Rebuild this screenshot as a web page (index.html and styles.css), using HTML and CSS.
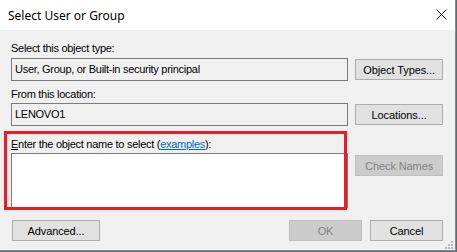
FILE: index.html
```html
<!DOCTYPE html>
<html>
<head>
<meta charset="utf-8">
<link rel="stylesheet" href="styles.css">
</head>
<body>
<div class="window">
  <div class="titlebar">
    <span class="title">Select User or Group</span>
    <svg class="close" width="11" height="11" viewBox="0 0 11 11"><path d="M0.5 0.5 L10.5 10.5 M10.5 0.5 L0.5 10.5" stroke="#1a1a1a" stroke-width="1" fill="none"/></svg>
  </div>
  <div class="content">
    <div class="label l1">Select this object type:</div>
    <div class="row">
      <div class="field ro">User, Group, or Built-in security principal</div>
      <button class="btn side">Object Types...</button>
    </div>
    <div class="label l2">From this location:</div>
    <div class="row">
      <div class="field ro">LENOVO1</div>
      <button class="btn side">Locations...</button>
    </div>
    <div class="label l3"><u>E</u>nter the object name to select (<a class="link">examples</a>):</div>
    <div class="row">
      <div class="field multi"></div>
      <button class="btn side disabled">Check Names</button>
    </div>
    <div class="bottom">
      <button class="btn adv">Advanced...</button>
      <div class="spacer"></div>
      <button class="btn ok disabled">OK</button>
      <button class="btn cancel">Cancel</button>
    </div>
    <div class="highlight"></div>
    <svg class="grip" width="9" height="9" viewBox="0 0 9 9">
      <rect x="6" y="0" width="2" height="2" fill="#b9b9b9"/>
      <rect x="3" y="3" width="2" height="2" fill="#b9b9b9"/>
      <rect x="6" y="3" width="2" height="2" fill="#b9b9b9"/>
      <rect x="0" y="6" width="2" height="2" fill="#b9b9b9"/>
      <rect x="3" y="6" width="2" height="2" fill="#b9b9b9"/>
      <rect x="6" y="6" width="2" height="2" fill="#b9b9b9"/>
    </svg>
  </div>
</div>
</body>
</html>
```
FILE: styles.css
```css
html, body {
  margin: 0;
  padding: 0;
  background: #5f6b78;
}
body {
  width: 457px;
  height: 252px;
  overflow: hidden;
  font-family: "Liberation Sans", Arial, sans-serif;
}
.window {
  width: 455px;
  height: 250px;
  border-right: 1px solid #8a8a8a;
  border-bottom: 1px solid #8a8a8a;
  background: #f0f0f0;
  display: flex;
  flex-direction: column;
}
.titlebar {
  height: 30px;
  background: #ffffff;
  display: flex;
  align-items: center;
  padding-left: 8px;
  position: relative;
}
.title {
  font-family: "Noto Sans", "Liberation Sans", sans-serif;
  font-size: 12px;
  color: #000;
}
.close {
  position: absolute;
  left: 436px;
  top: 9px;
}
.content {
  position: relative;
  flex: 1;
  padding: 12px 12px 0 11px;
  display: flex;
  flex-direction: column;
  font-size: 11px;
  color: #000;
}
.label {
  line-height: 13px;
  height: 13px;
  letter-spacing: -0.28px;
}
.l1 { margin-bottom: 3px; }
.l2 { margin-top: 7px; margin-bottom: 2px; }
.l3 { margin-top: 12px; margin-bottom: 2px; }
.link {
  color: #0066cc;
  text-decoration: underline;
}
.row {
  display: flex;
  align-items: flex-start;
  gap: 7px;
}
.field {
  box-sizing: border-box;
  width: 338px;
  height: 23px;
  border: 1px solid #7a7a7a;
  padding: 3px 3px;
  line-height: 15px;
  white-space: nowrap;
  letter-spacing: -0.28px;
}
.ro { background: #f0f0f0; }
.multi {
  background: #ffffff;
  height: 55px;
}
.btn {
  box-sizing: border-box;
  height: 21px;
  margin: 0;
  padding: 0;
  border: 1px solid #adadad;
  background: #e1e1e1;
  font-family: "Liberation Sans", Arial, sans-serif;
  font-size: 11px;
  letter-spacing: -0.1px;
  color: #000;
  text-align: center;
}
.side {
  width: 88px;
  margin-top: 1px;
}
.row .side.disabled { margin-top: 2px; }
.disabled {
  background: #cccccc;
  border-color: #bfbfbf;
  color: #838383;
}
.bottom {
  display: flex;
  margin-top: 12px;
  padding-left: 1px;
}
.adv { width: 88px; }
.spacer { flex: 1; }
.ok { width: 73px; }
.cancel { width: 73px; margin-left: 8px; }
.highlight {
  position: absolute;
  left: 4px;
  top: 101px;
  width: 337px;
  height: 73px;
  border: 3px solid #ed1c24;
}
.grip {
  position: absolute;
  left: 445px;
  top: 211px;
}
```
